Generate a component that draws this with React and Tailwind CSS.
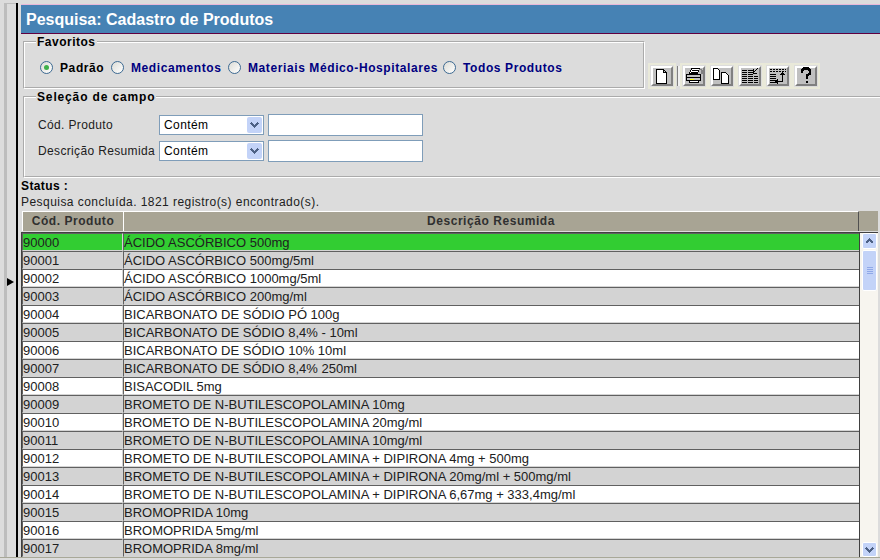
const rows = [
  ["90000", "ÁCIDO ASCÓRBICO 500mg"],
  ["90001", "ÁCIDO ASCÓRBICO 500mg/5ml"],
  ["90002", "ÁCIDO ASCÓRBICO 1000mg/5ml"],
  ["90003", "ÁCIDO ASCÓRBICO 200mg/ml"],
  ["90004", "BICARBONATO DE SÓDIO PÓ 100g"],
  ["90005", "BICARBONATO DE SÓDIO 8,4% - 10ml"],
  ["90006", "BICARBONATO DE SÓDIO 10% 10ml"],
  ["90007", "BICARBONATO DE SÓDIO 8,4% 250ml"],
  ["90008", "BISACODIL 5mg"],
  ["90009", "BROMETO DE N-BUTILESCOPOLAMINA 10mg"],
  ["90010", "BROMETO DE N-BUTILESCOPOLAMINA 20mg/ml"],
  ["90011", "BROMETO DE N-BUTILESCOPOLAMINA 10mg/ml"],
  ["90012", "BROMETO DE N-BUTILESCOPOLAMINA + DIPIRONA 4mg + 500mg"],
  ["90013", "BROMETO DE N-BUTILESCOPOLAMINA + DIPIRONA 20mg/ml + 500mg/ml"],
  ["90014", "BROMETO DE N-BUTILESCOPOLAMINA + DIPIRONA 6,67mg + 333,4mg/ml"],
  ["90015", "BROMOPRIDA 10mg"],
  ["90016", "BROMOPRIDA 5mg/ml"],
  ["90017", "BROMOPRIDA 8mg/ml"],
];

// pixel style toolbar glyphs
const icons = {
  novo: <path d="M3.500 2.500h7l3 3v10.500h-10zM10.500 2.500v3h3" fill="#fff" stroke="#000" />,
  imprimir: <><path d="M6.500 1.500h8l-2 5h-8z" fill="#fff" stroke="#000" /><path d="M7 3h6M6 5h6" stroke="#000" /><path d="M1.500 7.500h14v6h-14z" fill="#c0c0c0" stroke="#000" /><path d="M2 10h13" stroke="#000" /><path d="M5 12h4" stroke="#ff0" /><path d="M4.500 13.500h9v2h-9z" fill="#fff" stroke="#000" /><path d="M14 2h2v1h1v1h-1v1h1v1h-1" stroke="#808080" fill="none" /></>,
  copiar: <><path d="M0.500 1.500h4l2 2v9h-6z" fill="#fff" stroke="#000" /><path d="M8.500 5.500h4l3 3v8h-7z" fill="#fff" stroke="#000" /></>,
  colunas: <><path d="M1 3h11M1 5h11M1 7h11M1 9h16M1 11h16M1 13h16M1 15h16" stroke="#000" strokeDasharray="5 1" /><path d="M17 1l-5 5M12 2v4h4" stroke="#000" fill="none" /></>,
  ordenar: <><path d="M1 2h16M1 4h16" stroke="#000" strokeDasharray="2 1" /><path d="M1 7h6M1 9h6M1 11h6M1 13h6M1 15h6" stroke="#000" /><path d="M13.500 7v7.500h-5" stroke="#000" fill="none" /><path d="M13.500 5l-2.500 3h5zM9 12l-3 2.500 3 2.500z" fill="#000" /></>,
  ajuda: <path d="M5 5.500v-2l2-2h4l2 2v3l-3 2v3M10 13.500v2.500" stroke="#000" strokeWidth="2.500" fill="none" />,
};

function ToolButton({ name }) {
  return (
    <div className="w-[28px] h-[26px] border-2 border-[#e9e9d9] p-px flex">
      <div className="flex-1 flex items-center justify-center bg-[#c0c0c0] border-2 border-t-white border-l-white border-r-[#808080] border-b-[#808080]">
        <svg width="18" height="18" viewBox="0 0 18 18" shapeRendering="crispEdges" className="shrink-0">{icons[name]}</svg>
      </div>
    </div>
  );
}

function Radio({ checked, label, blue, className }) {
  return (
    <label className={`flex items-center ${className}`}>
      <span className="w-[13px] h-[13px] shrink-0 rounded-full border border-[#3d6a92] bg-gradient-to-br from-[#dcdcd6] to-white flex items-center justify-center">
        {checked && <span className="w-[5px] h-[5px] rounded-full bg-[#3fb04a]" />}
      </span>
      <span className={`ml-[7px] mt-[2px] whitespace-nowrap font-bold tracking-[0.6px] ${blue ? "text-[#000080]" : "text-black"}`}>{label}</span>
    </label>
  );
}

function CampoFiltro({ label }) {
  return (
    <div className="flex items-center h-[26px]">
      <span className="w-[123px] pl-[2px] tracking-[0.35px] text-[#202020]">{label}</span>
      <div className="relative w-[105px] h-[20px] border border-[#7f9db9] bg-white pl-[4px] leading-[18px] tracking-[0.4px]">
        Contém
        <span className="absolute right-[1px] top-[1px] w-[15px] h-[16px] rounded-[2px] bg-[#c3d3f8] flex items-center justify-center">
          <svg width="9" height="6" viewBox="0 0 9 6" shapeRendering="crispEdges"><path d="M1 1l3.500 3.500L8 1" stroke="#4d6185" strokeWidth="2" fill="none" /></svg>
        </span>
      </div>
      <input className="ml-[4px] w-[155px] h-[22px] border border-[#7f9db9] bg-white" />
    </div>
  );
}

export default function App() {
  return (
    <div className="w-[880px] h-[560px] overflow-hidden bg-[#dcdcdc] text-[12px] text-black font-['Liberation_Sans',Arial,sans-serif]">
      <div className="h-[558px] flex border-b border-[#a8a898]">
        <div className="w-[21px] shrink-0 pt-[3px] flex">
          <div className="w-[12px] ml-[4px] border-l-[3px] border-t border-[#bdbdbd] flex items-center">
            <span className="mt-[3px] border-y-[4px] border-l-[7px] border-y-transparent border-l-black" />
          </div>
          <div className="w-[2px] bg-black" />
        </div>

        <div className="flex-1 min-w-0 pt-[4px]">
          <div className="h-[30px] bg-[#4682b4] border-t border-[#e8b8d8] border-b border-b-[#600040] pl-[5px] text-white font-bold text-[16px] leading-[29px]">
            Pesquisa: Cadastro de Produtos
          </div>

          <div className="flex items-start mt-[2px] ml-[2px]">
            <fieldset className="w-[622px] h-[53px] border-2 border-white [border-style:groove] pl-[11px]">
              <legend className="font-bold tracking-[0.5px] px-[1px] leading-[12px]">Favoritos</legend>
              <div className="flex items-center mt-[9px] ml-[4px]">
                <Radio checked label="Padrão" className="w-[71px]" />
                <Radio blue label="Medicamentos" className="w-[117px]" />
                <Radio blue label="Materiais Médico-Hospitalares" className="w-[215px]" />
                <Radio blue label="Todos Produtos" />
              </div>
            </fieldset>
            <div className="flex items-center ml-[3px] mt-[27px]">
              <ToolButton name="novo" />
              <div className="w-[3px] h-[20px] mx-[0.5px] bg-[#f0f0f0] border-l border-[#808080]" />
              <ToolButton name="imprimir" />
              <ToolButton name="copiar" />
              <ToolButton name="colunas" />
              <ToolButton name="ordenar" />
              <ToolButton name="ajuda" />
            </div>
          </div>

          <fieldset className="mt-[2px] ml-[2px] w-[857px] h-[87px] border-2 border-r-0 border-white [border-style:groove] pl-[11px]">
            <legend className="font-bold tracking-[0.85px] px-[1px] leading-[12px]">Seleção de campo</legend>
            <div className="mt-[9px]">
              <CampoFiltro label="Cód. Produto" />
              <CampoFiltro label="Descrição Resumida" />
            </div>
          </fieldset>

          <div className="font-bold tracking-[0.4px] leading-[14px] mt-[1px]">Status :</div>
          <div className="tracking-[0.45px] leading-[14px] mt-[2px] text-[#202020]">Pesquisa concluída. 1821 registro(s) encontrado(s).</div>

          <div className="flex h-[20px] mt-[2px] ml-[1px] font-bold text-[#303030] tracking-[0.55px] text-center leading-[19px]">
            <div className="w-[101px] bg-[#a8a494] border-t border-l border-white">Cód. Produto</div>
            <div className="w-[736px] bg-[#a8a494] border-t border-l border-white border-r border-r-[#505050]">Descrição Resumida</div>
            <div className="w-[19px] bg-[#a8a494]" />
          </div>

          <div className="flex mt-[1px] h-[325px] overflow-hidden text-[13px]">
            <div className="w-[838px] shrink-0 border-t border-l border-[#404040]">
              {rows.map(([cod, desc], i) => {
                const cor = i === 0 ? "bg-[#32cd32]" : i % 2 ? "bg-[#d3d3d3]" : "bg-white";
                return (
                  <div key={cod} className={`flex h-[18px] leading-[17px] text-[#202020] ${cor}`}>
                    <div className="w-[101px] border-t border-l border-t-[#606060] border-l-[#606060] border-b border-r border-b-[#d4d4d4] border-r-[#d4d4d4] whitespace-nowrap overflow-hidden">{cod}</div>
                    <div className="flex-1 border-t border-l border-t-[#606060] border-l-[#606060] border-b border-b-[#d4d4d4] whitespace-nowrap overflow-hidden">{desc}</div>
                  </div>
                );
              })}
            </div>
            <div className="w-[19px] shrink-0 bg-[#f7f5ef] border-t border-l border-[#404040] pl-[2px] flex flex-col justify-between">
              <div>
                <div className="w-[15px] h-[16px] rounded-[2px] bg-[#c3d3f8] border border-white flex items-center justify-center">
                  <svg width="9" height="6" viewBox="0 0 9 6" shapeRendering="crispEdges"><path d="M1 5l3.500-3.500L8 5" stroke="#4d6185" strokeWidth="2" fill="none" /></svg>
                </div>
                <div className="mt-[1px] w-[15px] h-[41px] rounded-[2px] bg-[#c3d3f8] border border-white flex flex-col items-center justify-center gap-px">
                  <span className="w-[6px] h-px bg-[#8fa8e8]" />
                  <span className="w-[6px] h-px bg-[#8fa8e8]" />
                  <span className="w-[6px] h-px bg-[#8fa8e8]" />
                  <span className="w-[6px] h-px bg-[#8fa8e8]" />
                </div>
              </div>
              <div className="w-[15px] h-[15px] rounded-[2px] bg-[#c3d3f8] border border-white flex items-center justify-center">
                <svg width="9" height="6" viewBox="0 0 9 6" shapeRendering="crispEdges"><path d="M1 1l3.500 3.500L8 1" stroke="#4d6185" strokeWidth="2" fill="none" /></svg>
              </div>
            </div>
          </div>
        </div>
      </div>
    </div>
  );
}
